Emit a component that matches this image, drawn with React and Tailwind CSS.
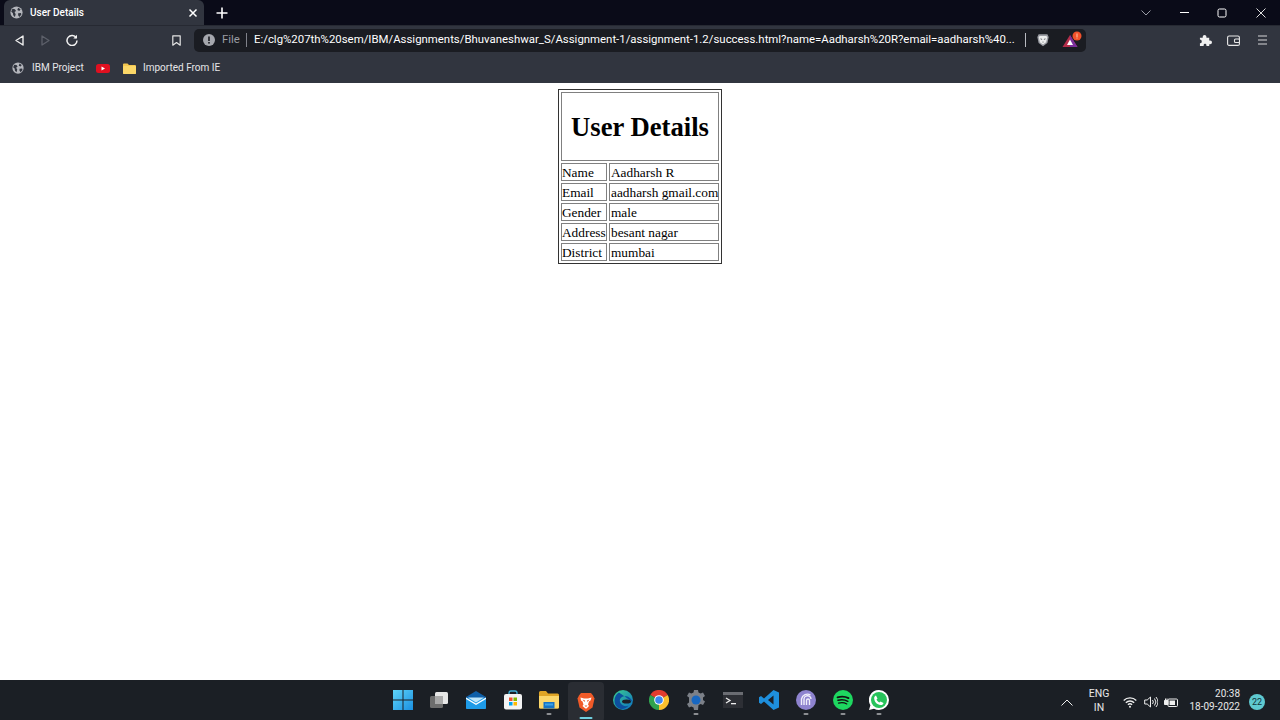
const UI = { fontFamily: 'Roboto,"Noto Sans",sans-serif' };

function Globe({ s = 14, c = "#b4b6bc", d = "#31353f" }) {
  return (
    <svg width={s} height={s} viewBox="0 0 16 16">
      <circle cx="8" cy="8" r="7.5" fill={c} />
      <path d="M3 3.5l3 .5 1.5 2-2 1.5L7 10l-1 3.5-2-2-.5-3L1.5 7zM10 2l3 2-1.5 2-2.5-1zM10 9l3.5-.5.5 2-2.5 3-1.5-2z" fill={d} />
    </svg>
  );
}

function Tab() {
  return (
    <div className="w-[200px] h-[25px] ml-1 rounded-t-[6px] bg-[#31353f] flex items-center pl-[6px] pr-[5px] text-white" style={UI}>
      <Globe s={13} />
      <span className="ml-[7px] text-[10px] font-medium flex-1 leading-none">User Details</span>
      <svg width="12" height="12" viewBox="0 0 12 12" stroke="#fff" strokeWidth="1.5" fill="none"><path d="M2.5 2.5l7 7M9.5 2.5l-7 7" /></svg>
    </div>
  );
}

function TabStrip() {
  return (
    <div className="h-[25px] bg-[#0a0b18] flex items-center">
      <Tab />
      <svg className="ml-[12px]" width="12" height="12" viewBox="0 0 12 12" stroke="#fff" strokeWidth="1.6"><path d="M6 .5v11M.5 6h11" /></svg>
      <div className="flex-1" />
      <svg width="10" height="6" viewBox="0 0 10 6" stroke="#9a9ca5" fill="none"><path d="M.5.5L5 5 9.5.5" /></svg>
      <div className="w-[38px] ml-[14px] flex justify-center"><div className="w-[9px] h-[1px] bg-white" /></div>
      <div className="w-[38px] flex justify-center">
        <svg width="10" height="10" viewBox="0 0 10 10" stroke="#fff" fill="none"><rect x="1" y="1" width="8" height="8" rx="1.5" /></svg>
      </div>
      <div className="w-[39px] flex justify-center">
        <svg width="10" height="10" viewBox="0 0 10 10" stroke="#ddd" fill="none"><path d="M.5.5l9 9M9.5.5l-9 9" /></svg>
      </div>
    </div>
  );
}

function BraveShield({ s = 14 }) {
  return (
    <svg width={s} height={s} viewBox="0 0 16 16">
      <path d="M3 1.5h10l1.500 3-1.500 7L8 15l-5-3.500-1.500-7z" fill="#9a9ca3" />
      <path d="M4 3.500h8l.8 1.500-1.300 5.500L8 13l-3.500-2.500L3.200 5z" fill="#eceded" />
      <path d="M5 6l2 .8v1L5.500 7.500zM11 6L9 6.800v1l1.500-.3zM7 10h2L8 11.200z" fill="#55575e" />
    </svg>
  );
}

function Toolbar() {
  return (
    <div className="h-[29px] bg-[#31353f] flex items-center pl-[6px] border-t border-[#262932]">
      <div className="w-[26px] flex justify-center">
        <svg width="9" height="11" viewBox="0 0 9 11" stroke="#eee" strokeWidth="1.4" fill="none" strokeLinejoin="round"><path d="M8 1L1 5.500l7 4.500z" /></svg>
      </div>
      <div className="w-[26px] flex justify-center">
        <svg width="9" height="11" viewBox="0 0 9 11" stroke="#5d606a" strokeWidth="1.3" fill="none" strokeLinejoin="round"><path d="M1 1l7 4.500L1 10z" /></svg>
      </div>
      <div className="w-[27px] flex justify-center">
        <svg width="12" height="12" viewBox="0 0 12 12" fill="none" stroke="#f2f2f2" strokeWidth="1.5"><path d="M10.300 4A5 5 0 1 0 11 6.500" /><path d="M11 .8v3.700H7.300z" fill="#f2f2f2" stroke="none" /></svg>
      </div>
      <div className="w-[9px] ml-[87px] mr-[13px] flex">
        <svg width="9" height="11" viewBox="0 0 9 11" stroke="#e4e4e4" strokeWidth="1.2" fill="none" strokeLinejoin="round"><path d="M.8.8h7.400v9.400L4.500 7.500.8 10.200z" /></svg>
      </div>
      <div className="w-[892px] h-[23px] rounded-[5px] bg-[#1a1c22] flex items-center pl-[9px]" style={UI}>
        <svg width="12" height="12" viewBox="0 0 12 12"><circle cx="6" cy="6" r="6" fill="#a5a7ad" /><rect x="5.200" y="2.500" width="1.600" height="4.500" fill="#1a1c22" /><rect x="5.200" y="8" width="1.600" height="1.600" fill="#1a1c22" /></svg>
        <span className="ml-[7px] w-[18px] text-[11.400px] text-[#9b9da3] leading-none">File</span>
        <div className="w-[1px] h-[14px] bg-[#80828a] ml-[6px]" />
        <span className="ml-[7px] w-[766px] text-[11.400px] text-white leading-none whitespace-nowrap">E:/clg%207th%20sem/IBM/Assignments/Bhuvaneshwar_S/Assignment-1/assignment-1.2/success.html?name=Aadharsh%20R?email=aadharsh%40...</span>
        <div className="w-[1px] h-[14px] bg-[#b8bac0] ml-[6px]" />
        <div className="ml-[10px] flex"><BraveShield /></div>
        <div className="ml-[12px] flex">
          <svg width="24" height="18" viewBox="0 0 24 18">
            <path d="M8 4L15.500 16H.500z" fill="#b32d4a" />
            <path d="M8 4l7.500 12H8z" fill="#7b2f9c" />
            <path d="M8 8.500L11 14H5z" fill="#fff" />
            <circle cx="15" cy="5" r="4.500" fill="#f2512b" />
            <rect x="14.500" y="2.500" width="1" height="3.500" fill="#f8c9a8" />
            <rect x="14.500" y="6.500" width="1" height="1" fill="#f8c9a8" />
          </svg>
        </div>
      </div>
      <div className="ml-[113px] flex items-center">
        <svg width="13" height="13" viewBox="0 0 14 14" fill="#f0f0f0"><path d="M1 4h3V3a2 2 0 0 1 4 0v1h3v3h1a2 2 0 0 1 0 4h-1v2H8v-1a1.500 1.500 0 0 0-3 0v1H1v-3a2 2 0 0 0 0-4z" /></svg>
        <svg className="ml-[15px]" width="13" height="11" viewBox="0 0 13 11" fill="none" stroke="#e8e8e8" strokeWidth="1.100"><rect x=".6" y="1" width="11.800" height="9.400" rx="1.500" /><rect x="7.500" y="4" width="5" height="3.500" rx="1" fill="#31353f" /></svg>
        <svg className="ml-[18px]" width="9" height="10" viewBox="0 0 9 10" stroke="#d5d5d8" strokeWidth="1.100"><path d="M0 1h9M0 5h9M0 9h9" /></svg>
      </div>
    </div>
  );
}

function Bookmarks() {
  return (
    <div className="h-[29px] pb-[1px] bg-[#31353f] flex items-center pl-[12px] text-[#e6e6e8] text-[10px] leading-none" style={UI}>
      <Globe s={12} />
      <span className="ml-[8px] w-[51px] whitespace-nowrap">IBM Project</span>
      <svg className="ml-[13px]" width="14" height="9" viewBox="0 0 14 9"><rect width="14" height="9" rx="2.500" fill="#e01020" /><path d="M5.500 2.500L9 4.500l-3.500 2z" fill="#fff" /></svg>
      <svg className="ml-[13px]" width="13" height="11" viewBox="0 0 13 11"><path d="M0 1.500A1 1 0 0 1 1 .5h3.500l1.500 1.500H12a1 1 0 0 1 1 1V10a1 1 0 0 1-1 1H1a1 1 0 0 1-1-1z" fill="#f3c64f" /><rect y="3" width="13" height="8" rx="1" fill="#fbd768" /></svg>
      <span className="ml-[7px] whitespace-nowrap">Imported From IE</span>
    </div>
  );
}

function Th({ children }) {
  return <td colSpan={2} className="border border-[#808080] h-[69px] p-0 pt-[1px] text-center"><h1 className="text-[26.670px] leading-[30px] font-bold text-black whitespace-nowrap">{children}</h1></td>;
}

function Td({ children, w }) {
  return <td className={`border border-[#808080] p-0 h-[18px] text-[13.330px] leading-[15px] text-black whitespace-nowrap ${w}`}>{children}</td>;
}

const rows = [["Name", "Aadharsh R"], ["Email", "aadharsh gmail.com"], ["Gender", "male"], ["Address", "besant nagar"], ["District", "mumbai"]];

function Content() {
  return (
    <main className="flex-1 bg-white flex justify-center items-start pt-[6px]" style={{ fontFamily: '"Liberation Serif",serif' }}>
      <table className="w-[164px] table-fixed border border-[#333] border-separate border-spacing-[2px]">
        <colgroup><col className="w-[46px]" /><col className="w-[110px]" /></colgroup>
        <tbody>
          <tr><Th>User Details</Th></tr>
          {rows.map(([a, b]) => (
            <tr key={a}><Td w="">{a}</Td><Td w="pl-[1px]">{b}</Td></tr>
          ))}
        </tbody>
      </table>
    </main>
  );
}

const icons = [
  { dot: 0, el: <svg width="20" height="20" viewBox="0 0 20 20"><defs><linearGradient id="w" x1="0" y1="0" x2="1" y2="1"><stop offset="0" stopColor="#5fd4f8" /><stop offset="1" stopColor="#1a8fe0" /></linearGradient></defs><path d="M0 0h9.500v9.500H0zM10.500 0H20v9.500h-9.500zM0 10.500h9.500V20H0zM10.500 10.500H20V20h-9.500z" fill="url(#w)" /></svg> },
  { dot: 0, el: <svg width="20" height="20" viewBox="0 0 20 20"><rect x="6" y="2" width="13" height="12" rx="1.500" fill="#e6e6e6" /><rect x="1" y="6" width="13" height="12" rx="1.500" fill="#6d6d6d" /><rect x="6" y="6" width="8" height="8" fill="#a9a9a9" /></svg> },
  { dot: 0, el: <svg width="20" height="20" viewBox="0 0 20 20"><path d="M0 7L10 1l10 6v11a1 1 0 0 1-1 1H1a1 1 0 0 1-1-1z" fill="#0f5fa8" /><path d="M0 8h20v10a1 1 0 0 1-1 1H1a1 1 0 0 1-1-1z" fill="#1e9be8" /><path d="M0 7.500l10 6 10-6V9l-10 6L0 9z" fill="#fff" /><path d="M2 7.500h16L10 12.500z" fill="#bfe6fa" /></svg> },
  { dot: 0, el: <svg width="20" height="20" viewBox="0 0 20 20"><path d="M6 6V3a2 2 0 0 1 2-2h4a2 2 0 0 1 2 2v3" fill="none" stroke="#3fb0d8" strokeWidth="1.300" /><rect x="1" y="4" width="18" height="15.500" rx="2" fill="#f3f3f3" /><rect x="6" y="7.500" width="3.500" height="3.500" fill="#f05030" /><rect x="10.500" y="7.500" width="3.500" height="3.500" fill="#7eb900" /><rect x="6" y="12" width="3.500" height="3.500" fill="#00a4ef" /><rect x="10.500" y="12" width="3.500" height="3.500" fill="#ffb900" /></svg> },
  { dot: 1, el: <svg width="20" height="20" viewBox="0 0 20 20"><path d="M0 2.500A1.500 1.500 0 0 1 1.500 1H7l2 2.500h9.500A1.500 1.500 0 0 1 20 5v12a1.500 1.500 0 0 1-1.500 1.500h-17A1.500 1.500 0 0 1 0 17z" fill="#e0a526" /><path d="M0 6h20v11a1.500 1.500 0 0 1-1.500 1.500h-17A1.500 1.500 0 0 1 0 17z" fill="#fcd76b" /><rect x="4.500" y="12" width="11" height="6.500" fill="#1673c5" /><rect x="6" y="13.500" width="8" height="2" fill="#3ca3e6" /></svg> },
  { dot: 2, el: <svg width="20" height="20" viewBox="0 0 20 20"><path d="M5 1h10l2 2.500 1.500 3-2 9L10 20l-6.500-4.500-2-9L3 3.500z" fill="#f05a28" /><path d="M4.500 5.500l3.500 1h4l3.500-1-1 3-1.500 1-1 3 1 1.500-2.500 2.500h-1L6.500 14l1-1.500-1-3-1.500-1z" fill="#fff" /><path d="M6.500 7.500L9 8.500 8.500 10zM13.500 7.500L11 8.500l.5 1.500zM8.500 13.500h3L10 15z" fill="#f05a28" /></svg> },
  { dot: 0, el: <svg width="20" height="20" viewBox="0 0 20 20"><defs><linearGradient id="e" x1="0" y1="0" x2="1" y2="1"><stop offset="0" stopColor="#3ccf8e" /><stop offset="1" stopColor="#0c6fc4" /></linearGradient></defs><circle cx="10" cy="10" r="10" fill="url(#e)" /><path d="M19.500 12c-1.500-5-6-6.500-9.500-5.500C7 7.500 6 10.500 7.500 13c1.500 3 5.500 4 8 2.500-3 4.500-10 5-13-.5C.5 11 1.500 5 6 2.500" fill="#0d4f9e" /><ellipse cx="13.500" cy="11.500" rx="4.500" ry="2" fill="#1c1f26" /></svg> },
  { dot: 0, el: <svg width="20" height="20" viewBox="0 0 20 20"><path d="M10 10L1.300 5A10 10 0 0 1 18.700 5z" fill="#e33b2e" /><path d="M10 10L1.300 5A10 10 0 0 0 10 20z" fill="#30a24f" /><path d="M10 10L18.700 5A10 10 0 0 1 10 20z" fill="#fbc02d" /><circle cx="10" cy="10" r="4.800" fill="#fff" /><circle cx="10" cy="10" r="3.800" fill="#3d86f0" /></svg> },
  { dot: 1, el: <svg width="20" height="20" viewBox="0 0 20 20"><path d="M8 0h4l.5 2.500 2.200 1 2.300-1 2 3.500-2 1.500v2.500l2 1.500-2 3.500-2.300-1-2.200 1L12 20H8l-.5-2.500-2.200-1-2.300 1-2-3.500 2-1.500V7.500L1 6l2-3.500 2.300 1 2.200-1z" fill="#7c8088" /><circle cx="10" cy="10" r="4.500" fill="#1767c2" /></svg> },
  { dot: 0, el: <svg width="20" height="20" viewBox="0 0 20 20"><rect y="2" width="20" height="16" fill="#2d2f35" /><rect y="2" width="20" height="3" fill="#6a6c72" /><path d="M3 8l4 2.500L3 13" fill="none" stroke="#eee" strokeWidth="1.300" /><rect x="8" y="13" width="5" height="1.300" fill="#eee" /></svg> },
  { dot: 0, el: <svg width="20" height="20" viewBox="0 0 20 20"><path d="M14.500 0L20 2.500v15L14.500 20 5 11.500l-3 2.500-2-1.200V7.200L2 6l3 2.500z" fill="#1e8fdd" /><path d="M14.500 5.500L9 10l5.500 4.500z" fill="#1c1f26" /></svg> },
  { dot: 1, el: <svg width="20" height="20" viewBox="0 0 20 20"><circle cx="10" cy="10" r="10" fill="#8e83cf" /><g fill="none" stroke="#f0eefb" strokeWidth="1.400"><path d="M5.500 15V9a6 6 0 0 1 9-4" /><path d="M8 15V9.500a3.500 3.500 0 0 1 7-.5" /><path d="M10.500 15v-4.500a1.500 1.500 0 0 1 3 0V15" /></g></svg> },
  { dot: 1, el: <svg width="20" height="20" viewBox="0 0 20 20"><circle cx="10" cy="10" r="10" fill="#1ed760" /><g fill="none" stroke="#111" strokeLinecap="round"><path d="M4.500 7.300c4-1.200 8-.8 11 .8" strokeWidth="1.800" /><path d="M5 10.300c3.500-1 7-.6 9.800 1" strokeWidth="1.500" /><path d="M5.500 13.100c3-.8 6-.5 8.300.8" strokeWidth="1.200" /></g></svg> },
  { dot: 1, el: <svg width="20" height="20" viewBox="0 0 20 20"><path d="M10 0a10 10 0 0 1 0 20 10 10 0 0 1-5-1.300L0 20l1.400-4.800A10 10 0 0 1 10 0z" fill="#fff" /><circle cx="10" cy="10" r="8" fill="#27c35a" /><path d="M7 5.500l1.500 3-1 1c.6 1.400 1.600 2.400 3 3l1-1 3 1.500c-.3 1.500-1.500 2.200-3 2-3.500-.5-6-3-6.300-6.500C5 7 5.700 6 7 5.500z" fill="#fff" /></svg> },
];

function Taskbar() {
  return (
    <footer className="h-[40px] bg-[#1b1f25] grid grid-cols-[1fr_auto_1fr] items-center text-white" style={UI}>
      <div />
      <div className="flex ml-[2px]">
        {icons.map((ic, i) => (
          <div key={i} className={`relative w-[36.700px] h-[40px] flex items-center justify-center ${ic.dot === 2 ? "bg-[#2a2d33] rounded-[4px] my-[2px] h-[36px]" : ""}`}>
            {ic.el}
            {ic.dot === 1 && <div className="absolute left-1/2 -translate-x-1/2 bottom-[5px] w-[5px] h-[2px] rounded bg-[#8d8f93]" />}
            {ic.dot === 2 && <div className="absolute left-1/2 -translate-x-1/2 bottom-[3px] w-[13px] h-[2px] rounded bg-[#6fd0e0]" />}
          </div>
        ))}
      </div>
      <div className="flex items-center justify-end">
        <svg width="12" height="7" viewBox="0 0 12 7" stroke="#eee" fill="none" strokeWidth="1"><path d="M.5 6.500L6 1l5.500 5.500" /></svg>
        <div className="ml-[15px] w-[22px] pb-[2px] text-center text-[10.500px] leading-[14px] text-[#e8e8e8]"><div>ENG</div><div>IN</div></div>
        <svg className="ml-[13px]" width="14" height="11" viewBox="0 0 14 11" fill="none" stroke="#eee" strokeWidth="1.300"><path d="M.7 3.500a9 9 0 0 1 12.600 0M2.800 5.700a6 6 0 0 1 8.400 0M4.900 7.800a3 3 0 0 1 4.200 0" /><circle cx="7" cy="9.700" r="1" fill="#eee" stroke="none" /></svg>
        <svg className="ml-[7px]" width="14" height="12" viewBox="0 0 14 12" fill="none" stroke="#eee" strokeWidth="1"><path d="M.7 4h2.500L6.500 1v10L3.200 8H.7zM8.500 4a3 3 0 0 1 0 4M10.500 2.500a5.500 5.500 0 0 1 0 7M12 1a8 8 0 0 1 0 10" /></svg>
        <svg className="ml-[6px]" width="14" height="11" viewBox="0 0 14 11" fill="none" stroke="#eee"><rect x="4" y="2" width="9.500" height="7.500" rx="1" /><rect x="5.500" y="3.500" width="5.500" height="4.500" fill="#eee" stroke="none" /><path d="M.5 3.500h3.500v4H.5zM1.500 1.500v2M3 1.500v2" fill="#eee" /></svg>
        <div className="ml-[4px] w-[58px] pb-[4px] text-right text-[10px] leading-[13px] text-[#e8e8e8]"><div>20:38</div><div>18-09-2022</div></div>
        <div className="ml-[9px] mr-[15px] w-[16px] h-[16px] rounded-full bg-[#5fc9d0] text-[#12343a] text-[9px] flex items-center justify-center leading-none">22</div>
      </div>
    </footer>
  );
}

export default function App() {
  return (
    <div className="w-[1280px] h-[720px] flex flex-col overflow-hidden">
      <TabStrip />
      <Toolbar />
      <Bookmarks />
      <Content />
      <Taskbar />
    </div>
  );
}
